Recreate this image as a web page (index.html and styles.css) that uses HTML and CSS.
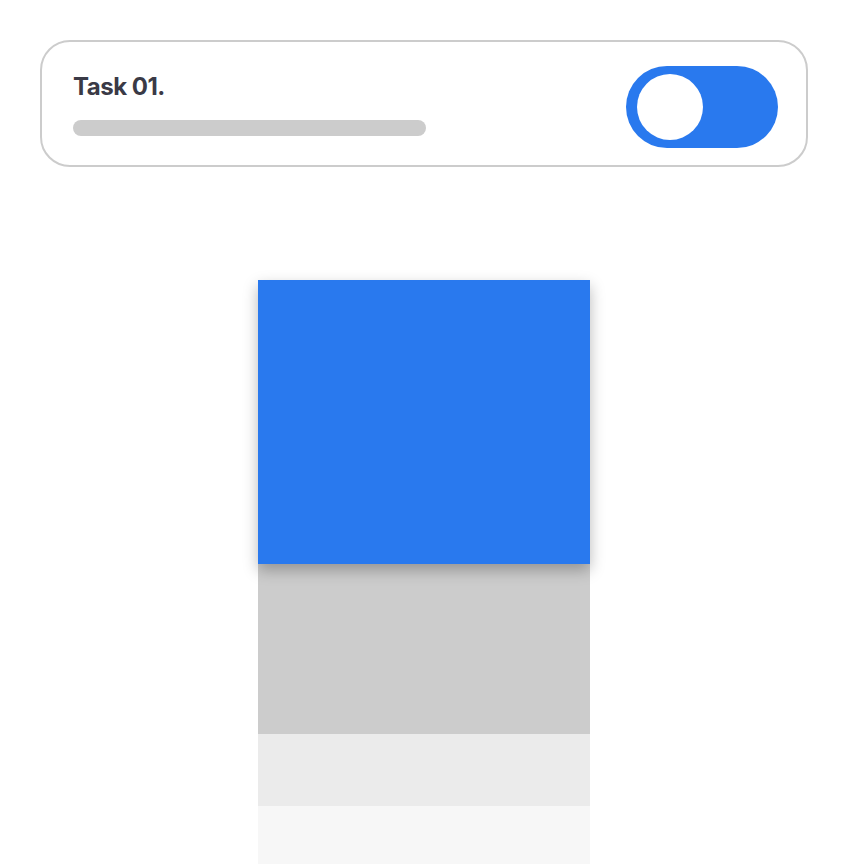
FILE: index.html
```html
<!DOCTYPE html>
<html>
<head>
<meta charset="utf-8">
<link rel="stylesheet" href="styles.css">
</head>
<body>
<div class="page">
  <div class="card">
    <div class="info">
      <div class="title">Task 01.</div>
      <div class="bar"></div>
    </div>
    <div class="toggle"><div class="knob"></div></div>
  </div>
  <div class="stack">
    <div class="layer blue"></div>
    <div class="layer gray1"></div>
    <div class="layer gray2"></div>
    <div class="layer gray3"></div>
  </div>
</div>
</body>
</html>
```
FILE: styles.css
```css
html, body {
  margin: 0;
  padding: 0;
  background: #ffffff;
  overflow: hidden;
}
.page {
  padding: 40px 40px 0 40px;
  display: flex;
  flex-direction: column;
  align-items: center;
}
.card {
  box-sizing: border-box;
  width: 768px;
  height: 127px;
  border: 2px solid #cccccc;
  border-radius: 30px;
  display: flex;
  align-items: flex-start;
  justify-content: space-between;
  padding: 30px 28px 0 31px;
}
.info {
  display: flex;
  flex-direction: column;
  gap: 19px;
}
.title {
  font-family: Inter, "Noto Sans", sans-serif;
  font-weight: 700;
  font-size: 24px;
  line-height: 29px;
  color: #3a3a46;
  letter-spacing: -0.5px;
}
.bar {
  width: 353px;
  height: 16px;
  border-radius: 8px;
  background: #cccccc;
}
.toggle {
  box-sizing: border-box;
  width: 152px;
  height: 82px;
  border-radius: 41px;
  background: #2979ee;
  display: flex;
  align-items: center;
  padding-left: 11px;
  margin-top: -6px;
}
.knob {
  width: 66px;
  height: 66px;
  border-radius: 50%;
  background: #ffffff;
}
.stack {
  margin-top: 113px;
  width: 332px;
  display: flex;
  flex-direction: column;
}
.layer {
  width: 100%;
}
.blue {
  height: 284px;
  background: #2979ee;
  box-shadow: 0 6px 14px rgba(0, 0, 0, 0.28);
  position: relative;
  z-index: 1;
}
.gray1 {
  height: 170px;
  background: #cccccc;
}
.gray2 {
  height: 72px;
  background: #ebebeb;
}
.gray3 {
  height: 58px;
  background: #f7f7f7;
}
```
